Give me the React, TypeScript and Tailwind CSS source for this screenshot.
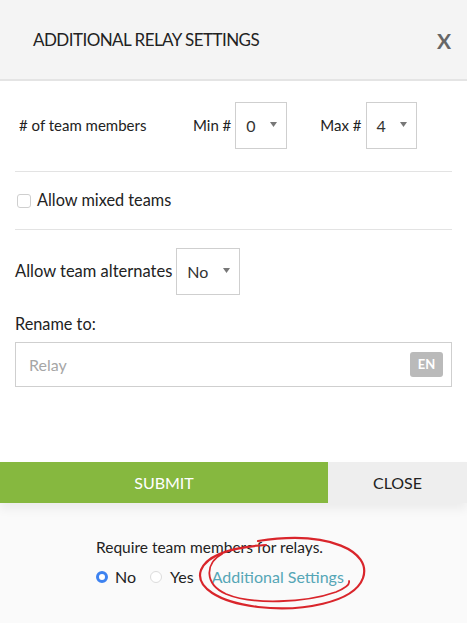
function Caret() {
  return (
    <svg width="7" height="5" viewBox="0 0 7 5" className="absolute right-[9px] top-[19px]">
      <path d="M0 0 L7 0 L3.5 5 Z" fill="#777" />
    </svg>
  );
}

function SelectBox({ value, width }: { value: string; width: string }) {
  return (
    <div className={`relative h-[47px] ${width} border border-[#cfcfcf] bg-white flex items-center pl-[10px] text-[16px] text-[#333]`}>
      {value}
      <Caret />
    </div>
  );
}

export default function App() {
  return (
    <div className="relative w-[467px] h-[623px] overflow-hidden bg-[#fafafa] font-['Lato','Noto_Sans',sans-serif] text-[#222]">
      {/* Header */}
      <div className="h-[81px] bg-[#f4f4f4] flex items-center justify-between pl-[33px] pr-[16px] border-b-2 border-[#e4e4e4]">
        <h2 className="text-[17px] tracking-[-0.55px] text-[#222] pt-[1px]">ADDITIONAL RELAY SETTINGS</h2>
        <span className="text-[21px] font-bold text-[#666] pt-[2px]">X</span>
      </div>

      {/* Body */}
      <div className="bg-white h-[381px]">
        <div className="flex items-center pl-[19px] pt-[21px] pb-[22px]">
          <span className="text-[15px] w-[174px]">
            # of team members
          </span>
          <span className="text-[15px] mr-[4px]">Min #</span>
          <SelectBox value="0" width="w-[52px]" />
          <span className="text-[15px] ml-[33px] mr-[4px]">Max #</span>
          <SelectBox value="4" width="w-[51px]" />
        </div>
        <div className="mx-[15px] border-t border-[#e3e3e3]" />

        <div className="flex items-center h-[57px] pl-[17px]">
          <span className="w-[14px] h-[14px] border border-[#cfcfcf] rounded-[3px] bg-white mr-[6px]" />
          <span className="text-[16.3px]">Allow mixed teams</span>
        </div>
        <div className="mx-[15px] border-t border-[#e3e3e3]" />

        <div className="flex items-center pl-[15px] pt-[18px]">
          <span className="text-[16.5px] mr-[4px]">Allow team alternates</span>
          <SelectBox value="No" width="w-[64px]" />
        </div>

        <div className="pl-[15px] pt-[18px] text-[16.3px] leading-[22px]">Rename to:</div>
        <div className="mx-[15px] mt-[7px] h-[45px] border border-[#cfcfcf] flex items-center justify-between pl-[13px] pr-[8px]">
          <span className="text-[16px] text-[#a6a6a6]">Relay</span>
          <span className="w-[33px] h-[25px] rounded-[3px] bg-[#bababa] text-white text-[13px] font-bold flex items-center justify-center">
            EN
          </span>
        </div>
      </div>

      {/* Footer buttons */}
      <div className="flex h-[41px] shadow-[0_6px_10px_rgba(0,0,0,0.06)] relative">
        <div className="w-[328px] bg-[#86b83f] text-white text-[16px] flex items-center justify-center">
          SUBMIT
        </div>
        <div className="flex-1 bg-[#eeeeee] text-[16px] text-[#222] flex items-center justify-center">
          CLOSE
        </div>
      </div>

      {/* Page behind */}
      <div className="pl-[96px] pt-[34px] text-[15.5px]">
        <div className="leading-[20px]">Require team members for relays.</div>
        <div className="flex items-center mt-[10px] leading-[20px] text-[16px]">
          <span className="w-[12px] h-[12px] rounded-full border-[3.5px] border-[#3d82f0] bg-white mr-[7px]" />
          <span className="mr-[14px]">No</span>
          <span className="w-[12px] h-[12px] rounded-full border border-[#dcdcdc] bg-white mr-[8px]" />
          <span className="mr-[18px]">Yes</span>
          <span className="text-[#55a6b6]">Additional Settings</span>
        </div>
      </div>

      {/* Red hand-drawn circle */}
      <svg
        className="absolute inset-0 pointer-events-none"
        width="467"
        height="623"
        viewBox="0 0 467 623"
      >
        <path
          d="M258 541 C330 530 372 552 363 578 C354 603 300 612 258 607 C218 602 195 587 201 570 C207 555 232 547 266 545"
          fill="none"
          stroke="#d9252b"
          strokeWidth="2.2"
          strokeLinecap="round"
        />
        <path
          d="M222 554 C205 563 204 584 226 594 C252 605 305 603 336 592 C346 588 350 584 349 581"
          fill="none"
          stroke="#d9252b"
          strokeWidth="1.8"
          strokeLinecap="round"
        />
      </svg>
    </div>
  );
}
